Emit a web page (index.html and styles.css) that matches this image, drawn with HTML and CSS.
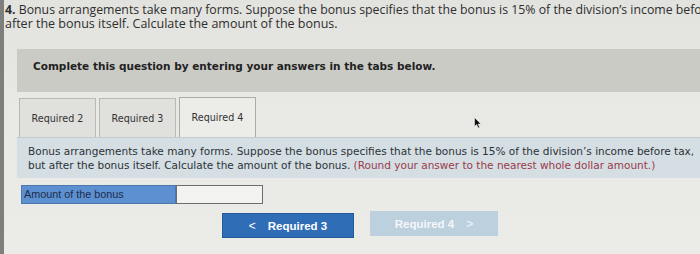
FILE: index.html
```html
<!DOCTYPE html>
<html>
<head>
<meta charset="utf-8">
<link rel="stylesheet" href="styles.css">
</head>
<body>
<div class="frame">
  <div class="question">
    <div class="qline"><b>4.</b> Bonus arrangements take many forms. Suppose the bonus specifies that the bonus is 15% of the division’s income before tax,</div>
    <div class="qline">after the bonus itself. Calculate the amount of the bonus.</div>
  </div>
  <div class="instr">Complete this question by entering your answers in the tabs below.</div>
  <div class="tabs">
    <div class="tab">Required 2</div>
    <div class="tab">Required 3</div>
    <div class="tab active">Required 4</div>
  </div>
  <div class="panel">Bonus arrangements take many forms. Suppose the bonus specifies that the bonus is 15% of the division’s income before tax, but after the bonus itself. Calculate the amount of the bonus. <span class="note">(Round your answer to the nearest whole dollar amount.)</span></div>
  <div class="answer">
    <div class="label">Amount of the bonus</div>
    <div class="input"></div>
  </div>
  <div class="nav">
    <div class="btn prev"><span class="chev">&lt;</span>Required 3</div>
    <div class="btn next">Required 4<span class="chev">&gt;</span></div>
  </div>
  <svg class="cursor" width="8" height="12" viewBox="0 0 8 12"><path d="M0.5 0.5 L0.5 9.5 L2.6 7.6 L4.2 11 L5.6 10.3 L4.1 7.1 L7 7.1 Z" fill="#111" stroke="#eee" stroke-width="0.6"/></svg>
</div>
</body>
</html>
```
FILE: styles.css
```css
html, body { margin: 0; padding: 0; }
body { width: 700px; height: 254px; overflow: hidden; background: #e6e6e2; }
.frame {
  position: relative;
  height: 254px;
  overflow: hidden;
  border-left: 4px solid #7e7e7c;
  background: linear-gradient(180deg, #e2e2de 0%, #e8e8e4 40%, #ebebe7 100%);
  box-sizing: border-box;
}
.question {
  padding: 3px 0 0 1px;
  font-family: "Open Sans", "Liberation Sans", sans-serif;
  font-size: 12.3px;
  line-height: 14px;
  color: #2e2e2e;
  white-space: nowrap;
  overflow: hidden;
  height: 31px;
  box-sizing: border-box;
}
.qline { height: 14px; }
.qline + .qline { font-size: 12.5px; }
.question b { font-weight: 700; }
.instr {
  margin: 18px 0 0 13px;
  height: 43px;
  box-sizing: border-box;
  padding-top: 11px;
  padding-left: 16px;
  background: #cbcbc6;
  font-family: "DejaVu Sans", Verdana, sans-serif;
  font-weight: bold;
  font-size: 10.5px;
  color: #222;
}
.tabs {
  display: flex;
  gap: 3px;
  margin: 6px 0 0 15px;
  height: 39px;
  align-items: flex-end;
}
.tab {
  width: 77px;
  height: 39px;
  box-sizing: border-box;
  border: 1px solid #b9b9b4;
  border-bottom: none;
  background: #e0e0dc;
  font-family: "DejaVu Sans", Verdana, sans-serif;
  font-size: 9.6px;
  color: #333;
  display: flex;
  align-items: center;
  justify-content: center;
}
.tab.active {
  height: 40px;
  background: #ecece8;
  border-color: #aaaaa6;
}
.panel {
  margin-left: 13px;
  height: 41px;
  box-sizing: border-box;
  padding: 6px 2px 0 11px;
  background: #d4dee3;
  border-top: 1px solid #c2ccd2;
  font-family: "DejaVu Sans", Verdana, sans-serif;
  font-size: 10.5px;
  line-height: 14px;
  color: #2c3338;
}
.note { color: #9a3b4b; }
.answer {
  display: flex;
  margin: 7px 0 0 17px;
  height: 19px;
}
.label {
  width: 155px;
  box-sizing: border-box;
  background: #5c90d0;
  border: 1px solid #4c78ad;
  padding-left: 2px;
  font-family: "Liberation Sans", Arial, sans-serif;
  font-size: 10.8px;
  line-height: 17px;
  color: #1c2d4c;
}
.input {
  width: 87px;
  box-sizing: border-box;
  background: #f3f3f1;
  border: 1.5px solid #6d6d70;
}
.nav {
  display: flex;
  gap: 16px;
  margin: 8px 0 0 218px;
  align-items: flex-start;
}
.btn {
  height: 25px;
  box-sizing: border-box;
  display: flex;
  align-items: center;
  justify-content: center;
  font-family: "Liberation Sans", Arial, sans-serif;
  font-weight: bold;
  font-size: 11.5px;
  color: #fff;
}
.prev {
  width: 132px;
  margin-top: 1px;
  background: #2f6db7;
  border: 1px solid #255a9a;
}
.prev .chev { margin-right: 12px; font-weight: normal; font-size: 12px; }
.next {
  width: 128px;
  margin-top: -1px;
  background: #bcd0de;
  color: #f4f7fa;
}
.next .chev { margin-left: 12px; font-weight: normal; font-size: 12px; }
.cursor {
  position: absolute;
  left: 470px;
  top: 117px;
}
```
